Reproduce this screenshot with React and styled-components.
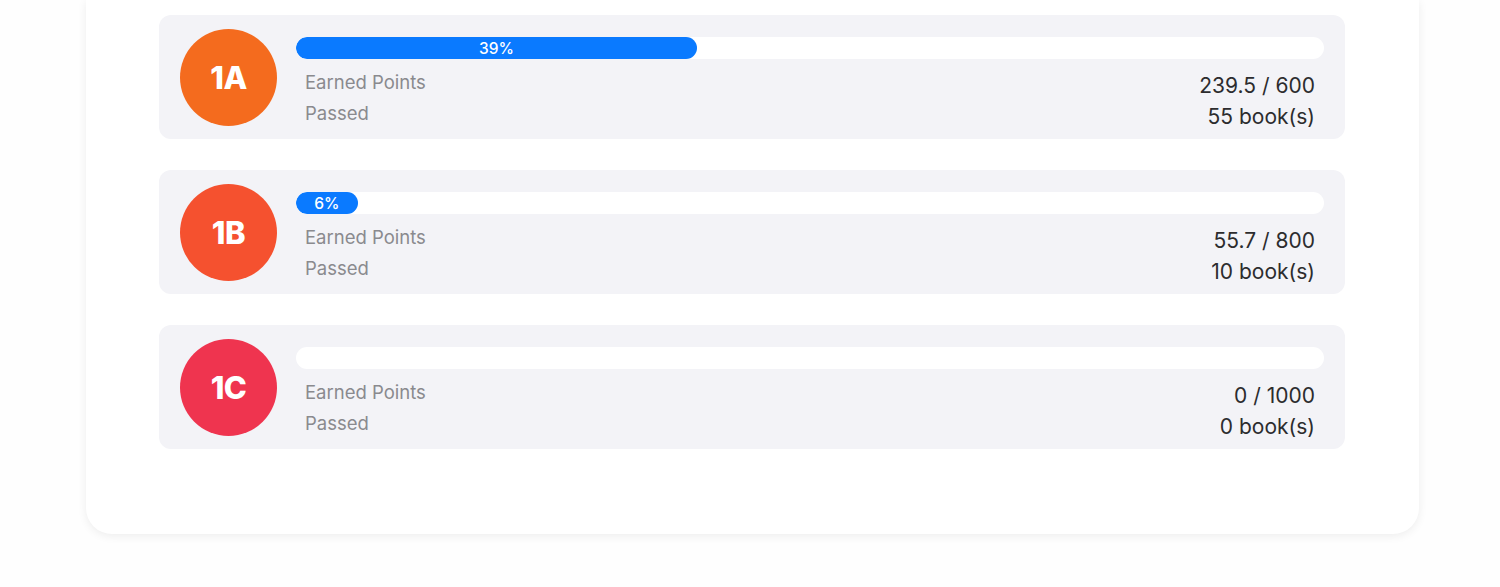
import styled, { createGlobalStyle } from "styled-components";

const GlobalStyle = createGlobalStyle`
body {
  margin: 0;
  background: #fefefe;
  font-family: Inter, "Open Sans", "Noto Sans", sans-serif;
}
`;

const Page = styled.div`
padding: 0 81px 55px 86px;
`;

const Card = styled.div`
background: #ffffff;
border-radius: 0 0 26px 26px;
box-shadow: 0 2px 10px rgba(0, 0, 0, 0.07);
padding: 15px 74px 85px 73px;
display: flex;
flex-direction: column;
gap: 31px;
`;

const Row = styled.div`
display: grid;
grid-template-columns: 97px 1fr;
column-gap: 19px;
align-items: start;
background: #f3f3f7;
border-radius: 12px;
padding: 14px 21px 13px 21px;
height: 124px;
box-sizing: border-box;
`;

const Badge = styled.div`
width: 97px;
height: 97px;
border-radius: 50%;
background: ${(props) => props.color};
color: #fff;
display: flex;
align-items: center;
justify-content: center;
font-size: 31px;
font-weight: 800;
letter-spacing: -0.5px;
`;

const Content = styled.div`
padding-top: 8px;
`;

const Track = styled.div`
height: 22px;
border-radius: 11px;
background: #ffffff;
overflow: hidden;
`;

const Fill = styled.div`
height: 100%;
border-radius: 11px;
background: #0a7aff;
color: #fff;
font-size: 15.5px;
font-weight: 500;
display: flex;
align-items: center;
justify-content: center;
`;

const Stats = styled.div`
display: flex;
justify-content: space-between;
padding: 8px 9px 0 9px;
`;

const Labels = styled.div`
display: flex;
flex-direction: column;
font-size: 18.5px;
line-height: 31px;
color: #8a8a8e;
`;

const Values = styled.div`
display: flex;
flex-direction: column;
align-items: flex-end;
padding-top: 3px;
font-size: 21px;
line-height: 31px;
color: #2c2c2e;
`;

const classes = [
  { name: "1A", color: "#f46b1e", pct: 39, points: "239.5 / 600", books: 55 },
  { name: "1B", color: "#f5512f", pct: 6, points: "55.7 / 800", books: 10 },
  { name: "1C", color: "#ef344f", pct: 0, points: "0 / 1000", books: 0 },
];

export default function App() {
  return (
    <Page>
      <GlobalStyle />
      <Card>
        {classes.map((c) => (
          <Row key={c.name}>
            <Badge color={c.color}>{c.name}</Badge>
            <Content>
              <Track>
                {c.pct > 0 && (
                  <Fill style={{ width: `${c.pct}%` }}>{c.pct}%</Fill>
                )}
              </Track>
              <Stats>
                <Labels>
                  <span>Earned Points</span>
                  <span>Passed</span>
                </Labels>
                <Values>
                  <span>{c.points}</span>
                  <span>{c.books} book(s)</span>
                </Values>
              </Stats>
            </Content>
          </Row>
        ))}
      </Card>
    </Page>
  );
}
